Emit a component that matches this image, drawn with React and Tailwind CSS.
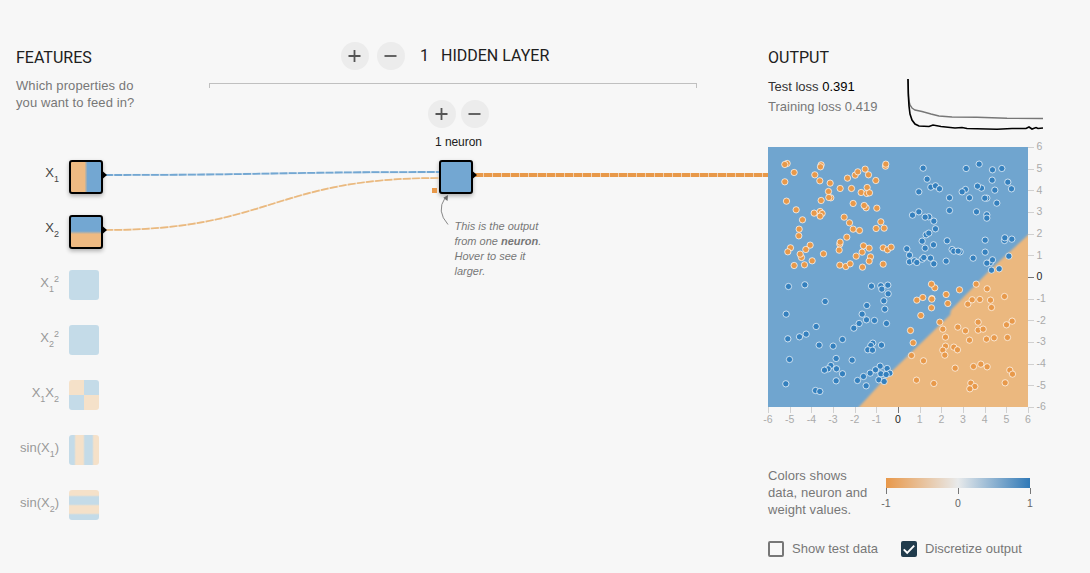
import React from "react";

const FEATURES = [
  { id: "x1", label: <>X<Sub>1</Sub></>, active: true, fill: "bg-[linear-gradient(90deg,#eeba82_45%,#73a7d2_55%)]" },
  { id: "x2", label: <>X<Sub>2</Sub></>, active: true, fill: "bg-[linear-gradient(180deg,#73a7d2_47%,#eeba82_57%)]" },
  { id: "x1sq", label: <>X<Sub>1</Sub><Sup>2</Sup></>, fill: "bg-[#c4dbe8]" },
  { id: "x2sq", label: <>X<Sub>2</Sub><Sup>2</Sup></>, fill: "bg-[#c4dbe8]" },
  { id: "x1x2", label: <>X<Sub>1</Sub>X<Sub>2</Sub></>, fill: "bg-[conic-gradient(#c4dbe8_0_25%,#f5e1c9_0_50%,#c4dbe8_0_75%,#f5e1c9_0)]" },
  { id: "sinx1", label: <>sin(X<Sub>1</Sub>)</>, fill: "bg-[linear-gradient(90deg,#c4dbe8_17%,#f5e1c9_23%,#f5e1c9_47%,#c4dbe8_53%,#c4dbe8_77%,#f5e1c9_83%)]" },
  { id: "sinx2", label: <>sin(X<Sub>2</Sub>)</>, fill: "bg-[linear-gradient(180deg,#f5e1c9_17%,#c4dbe8_23%,#c4dbe8_47%,#f5e1c9_53%,#f5e1c9_77%,#c4dbe8_83%)]" },
];

function Sub({ children }) {
  return <span className="relative top-[5px] text-[9px]">{children}</span>;
}

function Sup({ children }) {
  return <span className="relative -top-[5px] text-[9px]">{children}</span>;
}

// Data points, in thirds of a pixel, grouped by quadrant of the output plot.
const CLUSTERS = [
  {
    x: -8, y: -7, color: "#e8994a",
    points: [[81,70],[74,73],[102,97],[74,125],[183,74],[181,80],[164,104],[179,122],[210,129],[205,154],[212,173],[206,172],[183,181],[240,145],[274,145],[262,114],[285,105],[293,95],[315,87],[325,104],[347,121],[376,78],[377,72],[321,142],[303,157],[320,160],[328,158],[279,190],[318,203],[312,196],[350,204],[79,183],[108,209],[127,239],[117,267],[116,287],[162,219],[180,214],[186,220],[180,228],[252,231],[268,248],[279,267],[298,271],[260,291],[362,245],[348,265],[372,264],[91,323],[83,335],[150,315],[137,328],[124,352],[120,342],[156,362],[133,374],[102,376],[190,341],[239,312],[240,306],[237,330],[239,375],[257,379],[270,371],[288,348],[306,336],[310,317],[327,324],[331,350],[327,363],[307,381],[369,323],[382,329],[393,321],[369,372]],
  },
  {
    x: 122, y: -7, color: "#3480be",
    points: [[99,84],[228,85],[267,72],[307,89],[335,85],[111,117],[122,141],[136,137],[148,146],[86,155],[226,148],[216,155],[274,144],[262,138],[306,120],[353,126],[364,146],[314,150],[178,173],[238,173],[290,174],[284,174],[320,189],[178,211],[259,215],[290,224],[290,234],[67,225],[86,215],[116,230],[105,231],[131,243],[136,266],[108,284],[116,279],[96,303],[130,314],[171,302],[105,324],[50,326],[58,345],[58,365],[73,362],[80,367],[96,357],[101,352],[121,354],[131,371],[186,328],[191,333],[210,335],[204,333],[168,363],[249,354],[285,300],[343,301],[344,293],[365,297],[285,336],[356,348],[301,367],[290,369],[307,359],[304,390],[327,386]],
  },
  {
    x: -8, y: 123, color: "#3480be",
    points: [[85,49],[134,44],[195,94],[78,132],[168,169],[138,192],[118,200],[83,206],[177,225],[219,228],[247,208],[88,268],[77,341],[166,361],[179,364],[228,265],[212,286],[204,296],[193,300],[229,296],[228,332],[247,311],[276,270],[334,48],[362,47],[383,45],[365,57],[384,71],[371,92],[374,117],[320,106],[306,132],[297,160],[281,174],[319,149],[343,151],[379,160],[338,219],[332,226],[323,239],[337,240],[364,225],[360,288],[346,299],[381,295],[330,309],[362,311],[389,309],[378,313],[310,319],[292,331],[356,329],[372,334],[318,347]],
  },
  {
    x: 122, y: 123, color: "#e8994a",
    points: [[134,53],[124,42],[80,90],[98,82],[125,85],[125,87],[124,113],[92,136],[168,73],[173,100],[208,59],[258,42],[291,56],[233,102],[246,89],[269,88],[301,90],[304,112],[343,79],[61,181],[69,218],[64,256],[100,272],[79,330],[131,340],[149,156],[158,177],[166,201],[166,228],[158,240],[164,255],[191,231],[202,239],[203,171],[226,182],[264,156],[264,180],[279,177],[238,210],[289,207],[312,203],[349,164],[366,153],[352,202],[195,294],[250,289],[272,282],[291,290],[359,300],[367,312],[345,338],[242,339],[254,349],[239,356]],
  },
];

const TICKS = [-6, -5, -4, -3, -2, -1, 0, 1, 2, 3, 4, 5, 6];

function RoundButton({ minus }) {
  return (
    <button className="flex h-7 w-7 items-center justify-center rounded-full bg-[#ececec]" aria-label={minus ? "Remove" : "Add"}>
      <svg width="14" height="14" viewBox="0 0 14 14" stroke="#555" strokeWidth="1.8">
        <path d={minus ? "M.5 7H12.500" : "M.5 7H12.500M6.500 1V13"} />
      </svg>
    </button>
  );
}

function Node({ fill, active }) {
  return active ? (
    <div className={`h-[34px] w-[34px] shrink-0 rounded-[3px] border-2 border-black shadow-[0_2px_4px_rgba(0,0,0,0.3)] ${fill}`} />
  ) : (
    <div className={`h-[30px] w-[30px] shrink-0 rounded-[3px] ${fill}`} />
  );
}

function Features() {
  return (
    <section className="w-[209px] shrink-0 pt-12">
      <h2 className="pl-4 font-[Roboto,sans-serif] text-base leading-5 text-[#202020]">FEATURES</h2>
      <p className="h-[92px] pl-4 pt-[9px] text-[13px] leading-[17px] tracking-[0.1px] text-[#777]">
        Which properties do
        <br />
        you want to feed in?
      </p>
      {FEATURES.map((f) => (
        <div key={f.id} className="flex h-[55px] items-start">
          <div className={`w-[59px] whitespace-nowrap pt-[4px] text-right text-[13px] leading-[18px] ${f.active ? "text-[#444]" : "text-[#999]"}`}>
            {f.label}
          </div>
          <div className="ml-[10px]">
            <Node fill={f.fill} active={f.active} />
          </div>
        </div>
      ))}
    </section>
  );
}

function HiddenLayers() {
  return (
    <section className="w-[488px] shrink-0 pt-[42px]">
      <div className="flex h-7 items-center pl-[132px]">
        <RoundButton />
        <div className="w-2" />
        <RoundButton minus />
        <span className="ml-[15px] font-[Roboto,sans-serif] text-base text-[#202020]">1</span>
        <span className="ml-[12px] font-[Roboto,sans-serif] text-base text-[#202020]">HIDDEN LAYER</span>
      </div>
      <div className="mt-[13px] h-[5px] border-x border-t border-[#c0c0c0]" />
      <div className="mt-3 flex gap-[5px] pl-[219px]">
        <RoundButton />
        <RoundButton minus />
      </div>
      <div className="h-[32px] pl-[226px] pt-[6px] text-[12px] leading-4 tracking-[-0.06px] text-[#202020]">1 neuron</div>
      <div className="pl-[230px]">
        <Node fill="bg-[#73a7d2]" active />
      </div>
      <p className="pl-[245.500px] pt-[25px] text-[11px] italic leading-[15px] text-[#777]">
        This is the output
        <br />
        from one <b>neuron</b>.
        <br />
        Hover to see it
        <br />
        larger.
      </p>
    </section>
  );
}

function Connections() {
  return (
    <svg className="pointer-events-none absolute left-0 top-0" width="768" height="300" fill="none">
      <path d="M105 175C272 175 272 172 439 172" stroke="#73a7d2" strokeWidth="1.8" strokeOpacity=".3" />
      <path d="M105 175C272 175 272 172 439 172" stroke="#73a7d2" strokeWidth="1.8" strokeDasharray="7.8 1.4" />
      <path d="M105 230C272 230 272 178 439 178" stroke="#eab97f" strokeWidth="1.7" strokeOpacity=".3" />
      <path d="M105 230C272 230 272 178 439 178" stroke="#eab97f" strokeWidth="1.7" strokeDasharray="7.8 1.4" />
      <path d="M475 175H768" stroke="#e8994a" strokeWidth="4.2" strokeOpacity=".4" />
      <path d="M475 175H768" stroke="#e8994a" strokeWidth="4.2" strokeDasharray="8 1" />
      <path d="M103 171.500L107 175L103 178.500ZM103 226.500L107 230L103 233.500ZM473 171.500L477 175L473 178.500Z" fill="#000" />
      <rect x="432" y="188" width="5" height="5" fill="#e8994a" />
      <path d="M448 224.500Q436 211 445 198" stroke="#888" />
      <path d="M448 195L447.500 201L443.300 197.800Z" fill="#666" />
    </svg>
  );
}

function LossChart() {
  return (
    <svg className="mt-[30px]" width="137" height="56" viewBox="0 0 137 56" fill="none">
      <path d="M1 1L1.300 15L2 23L3 27L5 30L8 32L15 33.500L24 36L32 38L45 39L70 39.300L100 40.300L136 40.500" stroke="#777" strokeWidth="1.400" />
      <path d="M1 1L1.400 18L2 28L3 36L5 42L8 46L12 48L22 48.500L26 47L34 48.500L48 50L55 49.500L60 50.500L90 51.300L105 50.500L119 50.500L122 49L125 51L129 49.500L131 50.500L136 50" stroke="#000" strokeWidth="1.600" />
    </svg>
  );
}

function Heatmap() {
  return (
    <svg className="block overflow-visible" width="260" height="282" fontFamily="'Liberation Sans', sans-serif" fontSize="10.5">
      <defs>
        <clipPath id="plot"><rect width="260" height="260" /></clipPath>
        <filter id="soft" x="-5%" y="-5%" width="110%" height="110%"><feGaussianBlur stdDeviation="0.9" /></filter>
      </defs>
      <rect width="260" height="260" fill="#70a5cf" />
      <g clipPath="url(#plot)">
        <path d="M265 83L260 88L222 123L183 163L182 168L122 226L91 260L85 268H268Z" fill="#ebb87f" filter="url(#soft)" />
      </g>
      {CLUSTERS.map((c, i) => (
        <g key={i} fill={c.color} stroke="#fff" strokeOpacity=".7">
          {c.points.map(([px, py], j) => (
            <circle key={j} cx={c.x + px / 3 + 0.15} cy={c.y + py / 3 + 0.15} r="3.15" />
          ))}
        </g>
      ))}
      {TICKS.map((t) => {
        const p = ((t + 6) * 260) / 12;
        return (
          <g key={t} fill={t === 0 ? "#222" : "#aaa"}>
            <path d={`M${Math.round(p) + 0.5} 260v6M260 ${260 - Math.round(p) + 0.5}h6`} stroke={t === 0 ? "#777" : "#d0d0d0"} />
            <text x={p} y="276" textAnchor="middle">{t}</text>
            <text x="268.5" y={260 - p + 3.3}>{t}</text>
          </g>
        );
      })}
    </svg>
  );
}

function Legend() {
  return (
    <div className="mt-[38px] flex">
      <p className="w-[118px] whitespace-nowrap text-[13px] leading-[17px] tracking-[0.06px] text-[#777]">
        Colors shows
        <br />
        data, neuron and
        <br />
        weight values.
      </p>
      <div className="mt-[11px] w-[144px]">
        <div className="h-[10px] bg-[linear-gradient(90deg,#e8984a,#e8eaeb_50%,#3079b7)]" />
        <svg className="block overflow-visible" width="145" height="22" fill="#666" fontSize="10.5" fontFamily="'Liberation Sans', sans-serif">
          <path d="M.5 0v6M72.500 0v6M144.500 0v6" stroke="#777" />
          <text x="0" y="19" textAnchor="middle">-1</text>
          <text x="72" y="19" textAnchor="middle">0</text>
          <text x="144" y="19" textAnchor="middle">1</text>
        </svg>
      </div>
    </div>
  );
}

function Checkbox({ checked, children }) {
  return (
    <label className="flex items-center gap-2 whitespace-nowrap text-[13px] leading-4 text-[#777]">
      <span className={`flex h-4 w-4 items-center justify-center rounded-[2px] border-2 ${checked ? "border-[#213c4d] bg-[#213c4d]" : "border-[#777]"}`}>
        {checked && (
          <svg className="shrink-0" width="14" height="14" viewBox="0 0 14 14" fill="none" stroke="#fff" strokeWidth="1.900">
            <path d="M1.700 7.400L5.200 10.800L12.200 3.600" />
          </svg>
        )}
      </span>
      {children}
    </label>
  );
}

function Output() {
  return (
    <section className="ml-[71px] w-[276px] shrink-0 pt-12">
      <div className="flex h-[99px] justify-between">
        <div className="whitespace-nowrap text-[13px] leading-5">
          <h2 className="mb-[9px] font-[Roboto,sans-serif] text-base leading-5 text-[#202020]">OUTPUT</h2>
          <div className="text-[#333]">Test loss <span className="text-black">0.391</span></div>
          <div className="text-[#777]">Training loss 0.419</div>
        </div>
        <LossChart />
      </div>
      <Heatmap />
      <Legend />
      <div className="mt-[23px] flex h-4 items-center gap-[23px]">
        <Checkbox>Show test data</Checkbox>
        <Checkbox checked>Discretize output</Checkbox>
      </div>
    </section>
  );
}

export default function App() {
  return (
    <main className="relative flex h-[573px] w-[1090px] overflow-hidden bg-[#f7f7f7] font-['Liberation_Sans',sans-serif]">
      <Features />
      <HiddenLayers />
      <Output />
      <Connections />
    </main>
  );
}
